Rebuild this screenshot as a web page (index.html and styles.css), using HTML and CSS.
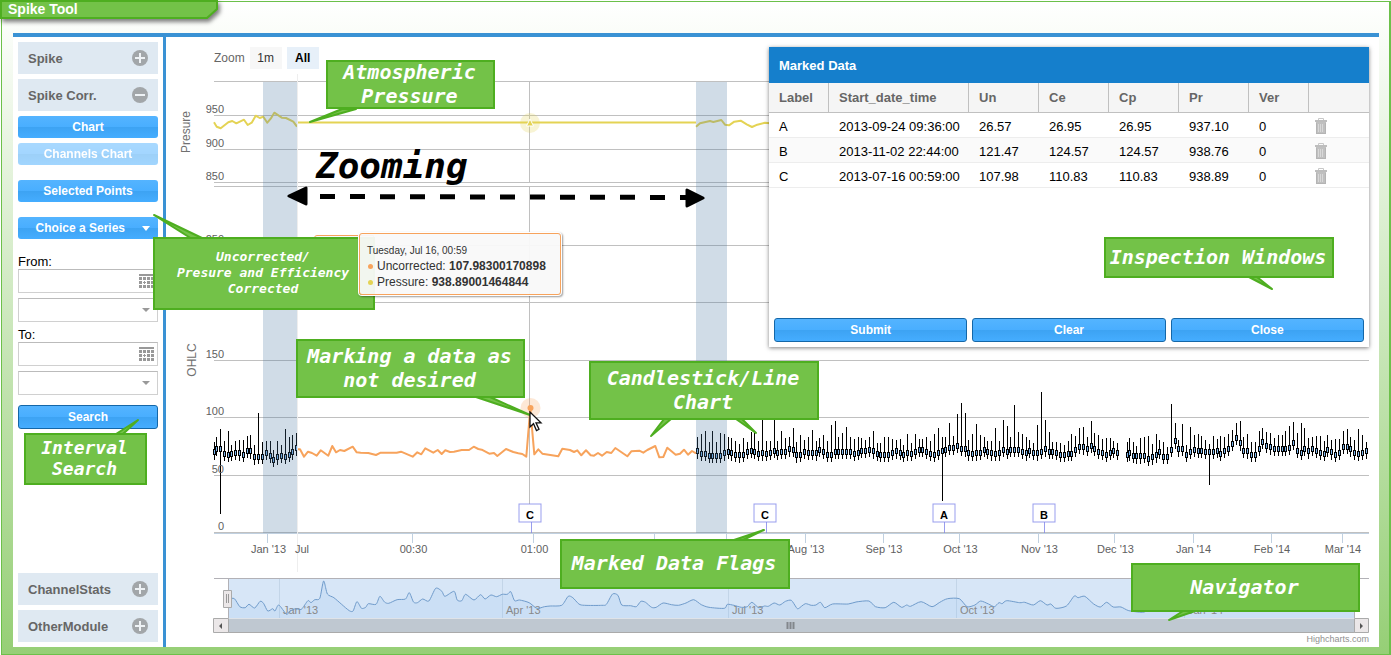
FILE: index.html
```html
<!DOCTYPE html>
<html lang="en">
<head>
<meta charset="utf-8">
<title>Spike Tool</title>
<link rel="stylesheet" href="styles.css">
</head>
<body>
<div class="page">
  <header class="tab">
    <svg class="tab-shape" width="226" height="28" viewBox="0 0 226 28" aria-hidden="true"><path d="M1 1H217V9L207 18H1Z"/></svg>
    <h1 class="tab-title">Spike Tool</h1>
  </header>
  <main class="workspace">
    <aside class="sidebar">
      <button class="section" type="button">Spike
        <svg width="16" height="16" viewBox="0 0 16 16"><circle cx="8" cy="8" r="8" fill="#a2a6a9"/><path d="M3 8H13M8 3V13" stroke="#eef2f5" stroke-width="2"/></svg></button>
      <button class="section" type="button">Spike Corr.
        <svg width="16" height="16" viewBox="0 0 16 16"><circle cx="8" cy="8" r="8" fill="#a2a6a9"/><path d="M3 8H13" stroke="#eef2f5" stroke-width="2"/></svg></button>
      <button class="btn" type="button">Chart</button>
      <button class="btn" type="button" disabled>Channels Chart</button>
      <button class="btn spaced" type="button">Selected Points</button>
      <button class="btn spaced menu" type="button">Choice a Series
        <svg width="8" height="5" viewBox="0 0 8 5"><path d="M0 0H8L4 5Z" fill="#fff"/></svg></button>
      <form class="interval">
        <label for="from-date">From:</label>
        <div class="field"><input id="from-date" type="text"><svg width="15" height="14"><use href="#calendar"/></svg></div>
        <div class="field"><select aria-label="From time"><option></option></select><svg class="caret" width="8" height="4" viewBox="0 0 8 4"><path d="M0 0H8L4 4Z" fill="#999"/></svg></div>
        <label for="to-date">To:</label>
        <div class="field"><input id="to-date" type="text"><svg width="15" height="14"><use href="#calendar"/></svg></div>
        <div class="field"><select aria-label="To time"><option></option></select><svg class="caret" width="8" height="4" viewBox="0 0 8 4"><path d="M0 0H8L4 4Z" fill="#999"/></svg></div>
        <button class="btn outlined" type="button">Search</button>
      </form>
      <div class="modules">
        <button class="section" type="button">ChannelStats
          <svg width="16" height="16" viewBox="0 0 16 16"><circle cx="8" cy="8" r="8" fill="#a2a6a9"/><path d="M3 8H13M8 3V13" stroke="#eef2f5" stroke-width="2"/></svg></button>
        <button class="section" type="button">OtherModule
          <svg width="16" height="16" viewBox="0 0 16 16"><circle cx="8" cy="8" r="8" fill="#a2a6a9"/><path d="M3 8H13M8 3V13" stroke="#eef2f5" stroke-width="2"/></svg></button>
      </div>
    </aside>
    <section class="chart">
      <div class="range">
        <span>Zoom</span>
        <button type="button">1m</button>
        <button type="button" class="active">All</button>
      </div>
      <svg class="plot" viewBox="166 69 1213 578" preserveAspectRatio="xMinYMin meet">
        <defs>
          <symbol id="calendar" viewBox="0 0 15 14"><path d="M0 0H15V2H0ZM0 3H3V6H0ZM4 3H7V6H4ZM8 3H11V6H8ZM12 3H15V6H12ZM0 7H3V10H0ZM8 7H11V10H8ZM12 7H15V10H12ZM5 7H6V8H7V9H6V10H5V9H4V8H5ZM0 11H3V14H0ZM4 11H7V14H4ZM8 11H11V14H8ZM12 11H15V14H12Z" fill="#999"/></symbol>
          <symbol id="trash" viewBox="0 0 12 16"><path d="M3.500 2V.5H8.500V2" fill="none" stroke="#c8c8c8"/><path d="M0 2H12V4H0Z" fill="#bdbdbd"/><path d="M1 4H11V16H1Z" fill="#c0c0c0"/><path d="M3.500 6V14M5.500 6V14M7.500 6V14" stroke="#d8d8d8"/><path d="M1 15.500H11M1.500 5V16M10.500 5V16" stroke="#b4b4b4"/></symbol>
        </defs>
        <path class="grid" d="M214 81.500H1369M214 115.500H1369M214 149.500H1369M214 182.500H1369M214 186.500H1369M214 245.500H1369M214 302.500H1369M214 360.500H1369M214 417.500H1369M214 475.500H1369M214 532.500H1369"/>
        <path class="axis" d="M214 533.500H1369M267.500 534V543M412.500 534V543M533.500 534V543M654.500 534V543M726.500 534V543M805.500 534V543M883.500 534V543M959.500 534V543M1038.500 534V543M1114.500 534V543M1193.500 534V543M1271.500 534V543M1342.500 534V543"/>
        <path class="grid" d="M529.500 82V182M529.500 187V504"/>
        <g id="candles"></g>
        <path id="pressure" class="pressure"/>
        <path id="uncorrected" class="uncorrected"/>
        <path class="band" d="M263 82H297V533H263ZM696 82H727V533H696Z"/>
        <path d="M297.500 74V572" stroke="#eee"/>
        <circle cx="530" cy="123" r="10" fill="#e4d354" opacity=".25"/><path d="M530 119L533.500 126H526.500Z" fill="#e4d354" stroke="#fff"/>
        <circle cx="530.500" cy="408" r="10" fill="#f7a35c" opacity=".25"/><circle cx="530.500" cy="408" r="3" fill="#f7a35c"/>
        <g class="labels">
          <g text-anchor="end"><text x="224" y="113">950</text><text x="224" y="147">900</text><text x="224" y="180">850</text><text x="224" y="243">250</text><text x="224" y="358">150</text><text x="224" y="415">100</text><text x="224" y="473">50</text><text x="224" y="530">0</text></g>
          <g text-anchor="middle"><text x="268.500" y="553">Jan '13</text><text x="302" y="553">Jul</text><text x="413.500" y="553">00:30</text><text x="534.500" y="553">01:00</text><text x="806" y="553">Aug '13</text><text x="884" y="553">Sep '13</text><text x="960.500" y="553">Oct '13</text><text x="1039.500" y="553">Nov '13</text><text x="1115.500" y="553">Dec '13</text><text x="1193.500" y="553">Jan '14</text><text x="1272" y="553">Feb '14</text><text x="1343" y="553">Mar '14</text></g>
          <g text-anchor="middle" class="titles"><text transform="translate(190 132) rotate(-90)">Presure</text><text transform="translate(196 360) rotate(-90)">OHLC</text></g>
        </g>
        <g class="flags">
          <path d="M531.500 522V533M766.500 522V533M944.500 522V533M1044.500 522V533"/>
          <rect x="519" y="504" width="22" height="18"/><rect x="754" y="504" width="22" height="18"/><rect x="933" y="504" width="22" height="18"/><rect x="1033" y="504" width="22" height="18"/>
          <text x="530" y="519">C</text><text x="765" y="519">C</text><text x="944" y="519">A</text><text x="1044" y="519">B</text>
        </g>
        <g class="navigator">
          <path d="M229 579H1354V618H229Z" fill="#d7e6f7"/>
          <path d="M279.500 579V618M502.500 579V618M728.500 579V618M956.500 579V618M1184.500 579V618" stroke="#c3d5e8"/>
          <path id="overview-area" fill="#7eb2e4" opacity=".13"/>
          <g class="nav-labels"><text x="283" y="614">Jan '13</text><text x="506" y="614">Apr '13</text><text x="732" y="614">Jul '13</text><text x="960" y="614">Oct '13</text><text x="1188" y="614">Jan '14</text></g>
          <path id="overview" fill="none" stroke="#6f9bcb"/>
          <path d="M214 578.500H1369M228.500 579V618M1354.500 579V618" stroke="#b2b1b6"/>
          <path d="M228 618.500H1355V632.500H228Z" fill="#bfc8d1"/><path d="M228 632.500H1355" stroke="#aaa"/>
          <path d="M213.500 618.500H228.500V632.500H213.500ZM1354.500 618.500H1368.500V632.500H1354.500ZM223.500 590.500H231.500V607.500H223.500Z" fill="#ebe7e8" stroke="#aaa"/>
          <path d="M222 623V629L219 626ZM1360 623V629L1363 626Z" fill="#555"/>
          <path d="M226.500 594V603M228.500 594V603" stroke="#999"/>
          <path d="M787.500 622V629M790.500 622V629M793.500 622V629" stroke="#82878c" stroke-width="2"/>
        </g>
        <a href="#highcharts"><text class="credit" x="1369" y="642">Highcharts.com</text></a>
      </svg>
      <div class="window">
        <h2>Marked Data</h2>
        <table>
          <colgroup><col class="c60"><col class="c140"><col class="c70"><col class="c70"><col class="c70"><col class="c70"><col class="c60"><col class="c60"></colgroup>
          <thead><tr><th>Label</th><th>Start_date_time</th><th>Un</th><th>Ce</th><th>Cp</th><th>Pr</th><th>Ver</th><th></th></tr></thead>
          <tbody>
            <tr><td>A</td><td>2013-09-24 09:36:00</td><td>26.57</td><td>26.95</td><td>26.95</td><td>937.10</td><td>0</td><td><button type="button" aria-label="Delete A"><svg width="12" height="16"><use href="#trash"/></svg></button></td></tr>
            <tr><td>B</td><td>2013-11-02 22:44:00</td><td>121.47</td><td>124.57</td><td>124.57</td><td>938.76</td><td>0</td><td><button type="button" aria-label="Delete B"><svg width="12" height="16"><use href="#trash"/></svg></button></td></tr>
            <tr><td>C</td><td>2013-07-16 00:59:00</td><td>107.98</td><td>110.83</td><td>110.83</td><td>938.89</td><td>0</td><td><button type="button" aria-label="Delete C"><svg width="12" height="16"><use href="#trash"/></svg></button></td></tr>
          </tbody>
        </table>
        <footer><button class="btn outlined" type="button">Submit</button><button class="btn outlined" type="button">Clear</button><button class="btn outlined" type="button">Close</button></footer>
      </div>
    </section>
  </main>

  <div class="notes">
    <div class="ghost-tip"></div>
    <svg class="tails" width="1391" height="655" viewBox="0 0 1391 655" aria-hidden="true">
      <g class="tail">
        <path d="M342 109L310 122L356 109Z"/><path d="M192 239L154 215L204 239Z"/><path d="M116 434L138 420L123 434Z"/>
        <path d="M476 397L530 415L490 397Z"/><path d="M664 419L651 436L671 419Z"/><path d="M736 419L756 433L742 419Z"/>
        <path d="M734 540L764 530L743 540Z"/><path d="M1249 277L1272 289L1257 277Z"/><path d="M1183 611L1169 620L1195 611Z"/>
      </g>
      <path d="M320 196.500L686 197.500" stroke="#000" stroke-width="5" stroke-dasharray="15 15"/>
      <path d="M680 197.500H688" stroke="#000" stroke-width="5"/>
      <path d="M289 196L306 188V204ZM703 198L687 190V206Z" stroke="#000" stroke-width="3" stroke-linejoin="round"/>
    </svg>
    <div class="callout atmospheric">Atmospheric<br>Pressure</div>
    <div class="callout series">Uncorrected/<br>Presure and Efficiency<br>Corrected</div>
    <div class="callout search">Interval<br>Search</div>
    <div class="callout marking">Marking a data as<br>not desired</div>
    <div class="callout candle">Candlestick/Line<br>Chart</div>
    <div class="callout flags-note">Marked Data Flags</div>
    <div class="callout inspection">Inspection Windows</div>
    <div class="callout navigator-note">Navigator</div>
    <div class="zooming">Zooming</div>
    <div class="tooltip">
      <small>Tuesday, Jul 16, 00:59</small>
      <span><i class="dot orange"></i>Uncorrected: <b>107.98300170898</b></span>
      <span><i class="dot yellow"></i>Pressure: <b>938.89001464844</b></span>
    </div>
    <svg class="cursor" width="14" height="21" viewBox="0 0 14 21"><path d="M1 1V16L4.500 12.700L7.500 19.500L10 18.300L7 11.800H12Z" fill="#fff" stroke="#111" stroke-width="1.300"/></svg>
  </div>
</div>
<script src="chart.js"></script>
</body>
</html>
```

FILE: styles.css
```css
* { box-sizing: border-box; }
body { margin: 0; font-family: "Liberation Sans", Arial, sans-serif; font-size: 13px; color: #000; background: #fff; }
button, input, select { font: inherit; margin: 0; }
.page { position: relative; min-height: 100vh; padding: 0 0 0 1px; display: flex; }
.workspace { flex: 1; display: flex; margin-top: 1px; border: solid #6cc04a; border-width: 1px 2px 1px 1px; padding: 31px 10px 7px 11px; background: linear-gradient(#fff, #96cf76); }
.tab { position: absolute; left: 0; top: 0; }
.tab-shape { display: block; filter: drop-shadow(2px 3px 2px rgba(0, 0, 0, .5)); }
.tab-shape path { fill: #73c248; stroke: #4eae20; stroke-width: 2px; }
.tab-title { position: absolute; left: 8px; top: 0; margin: 0; font-size: 14px; line-height: 18px; color: #fff; white-space: nowrap; }

.sidebar { flex: 0 0 153px; display: flex; flex-direction: column; gap: 5px; padding: 5px; background: #fff; border-top: 4px solid #3a92d4; border-right: 3px solid #3a92d4; }
.section { display: flex; align-items: center; justify-content: space-between; width: 100%; height: 32px; padding: 0 10px; border: 0; background: #dfe9f2; color: #666; font-weight: bold; }
.btn { height: 22px; padding: 0; border: 0; border-radius: 3px; color: #fff; font-size: 12px; font-weight: bold; background: linear-gradient(#54b4ff 0%, #49aeff 50%, #3da3f3 52%, #45adff 100%); }
.btn:disabled { opacity: .5; }
.btn.spaced { margin-top: 10px; }
.btn.menu { display: flex; align-items: center; justify-content: flex-end; gap: 17px; padding-right: 8px; }
.btn.outlined { height: 24px; border: 1px solid #1467a8; }
.interval { display: flex; flex-direction: column; gap: 5px; padding-top: 10px; }
.interval label { line-height: 15px; margin-bottom: -5px; }
.interval .btn { margin-top: 5px; }
.field { position: relative; height: 24px; }
.field input, .field select { display: block; width: 100%; height: 24px; border: 1px solid #d0d0d0; border-top-color: #bbb; border-radius: 0; background: #fff; appearance: none; }
.field svg { position: absolute; right: 4px; top: 5px; pointer-events: none; }
.field .caret { right: 8px; top: 10px; }
.modules { display: flex; flex-direction: column; gap: 5px; margin-top: auto; }

.chart { flex: 1; min-width: 0; position: relative; background: #fff; border-top: 4px solid #3a92d4; }
.range { display: flex; align-items: center; gap: 5px; height: 32px; padding: 10px 0 0 48px; color: #666; font-size: 12px; }
.range button { width: 32px; height: 22px; padding: 0; border: 0; background: #f7f7f7; color: #333; }
.range .active { background: #e7f0f9; color: #000; font-weight: bold; }
.plot { display: block; width: 100%; height: auto; }
.grid { stroke: #c0c0c0; fill: none; }
.axis { stroke: #c0d0e0; fill: none; }
.band { fill: rgba(68, 114, 160, .25); }
.pressure, .uncorrected { fill: none; stroke-width: 2px; stroke-linejoin: round; }
.pressure { stroke: #e4d354; }
.uncorrected { stroke: #f7a35c; }
.wick { stroke: #000; }
.candle-body { fill: #7cb5ec; stroke: #000; }
.labels text, .nav-labels text { font-size: 11px; fill: #606060; }
.labels .titles text { font-size: 12px; fill: #707070; }
.nav-labels text { fill: #888; }
.flags path, .flags rect { stroke: #8085e9; fill: none; opacity: .8; }
.flags rect { fill: #fff; }
.flags text { font-size: 11px; font-weight: bold; text-anchor: middle; }
.credit { font-size: 9px; fill: #909090; text-anchor: end; }

.window { position: absolute; right: 10px; top: 10px; width: 600px; min-height: 300px; display: flex; flex-direction: column; background: #fff; box-shadow: 0 1px 4px rgba(0, 0, 0, .5); }
.window h2 { margin: 0; padding: 1px 10px 0; line-height: 35px; font-size: 13px; color: #fff; background: #157fcc; }
.window table { width: 100%; table-layout: fixed; border-collapse: separate; border-spacing: 0; }
.c60 { width: 60px; }
.c70 { width: 70px; }
.c140 { width: 140px; }
.window th, .window td { padding: 0 10px; text-align: left; white-space: nowrap; }
.window th { height: 30px; color: #666; background: #f5f5f5; border-right: 1px solid #c0c0c0; border-bottom: 1px solid #c0c0c0; }
.window th:last-child { border-right: 0; }
.window td { height: 25px; padding-top: 2px; border-bottom: 1px solid #ededed; }
.window tr:nth-child(even) td { background: #fafafa; }
.window td:last-child { padding: 2px 6px 0; }
.window td button { display: block; padding: 0; border: 0; background: none; }
.window td svg { display: block; }
.window footer { display: flex; gap: 5px; padding: 5px; margin-top: auto; }
.window footer .btn { flex: 1; }

.notes { position: absolute; left: 0; top: 0; pointer-events: none; }
.tails { position: absolute; left: 0; top: 0; }
.tail path { fill: #73c248; stroke: #4eae20; stroke-width: 2px; stroke-linejoin: round; }
.callout { position: absolute; display: flex; align-items: center; justify-content: center; padding: 0 2px 2px 0; text-align: center; white-space: nowrap; color: #fff; background: #73c248; border: 2px solid #4eae20; font: italic bold 20px/24px "DejaVu Sans Mono", monospace; }
.atmospheric { left: 326px; top: 60px; width: 169px; height: 49px; }
.series { left: 153px; top: 237px; width: 222px; height: 73px; font-size: 13px; line-height: 16px; }
.search { left: 24px; top: 433px; width: 123px; height: 52px; font-size: 18px; line-height: 21px; }
.marking { left: 296px; top: 339px; width: 229px; height: 59px; }
.candle { left: 589px; top: 361px; width: 230px; height: 59px; }
.flags-note { left: 560px; top: 539px; width: 230px; height: 50px; }
.inspection { left: 1104px; top: 237px; width: 230px; height: 41px; }
.navigator-note { left: 1131px; top: 563px; width: 229px; height: 49px; }
.zooming { position: absolute; left: 316px; top: 145px; font: italic bold 36px/42px "DejaVu Sans Mono", monospace; }
.tooltip { position: absolute; left: 359px; top: 233px; width: 202px; height: 62px; display: flex; flex-direction: column; padding: 9px 0 0 7px; border: 1px solid #f7a35c; border-radius: 3px; background: rgba(249, 249, 249, .95); box-shadow: 0 0 0 1px #fff, 1px 1px 2px 1px rgba(0, 0, 0, .4); color: #333; font-size: 12px; line-height: 16px; white-space: nowrap; }
.tooltip small { font-size: 10px; line-height: 15px; }
.dot { display: inline-block; width: 5px; height: 5px; margin: 0 4px 1px 1px; border-radius: 50%; }
.orange { background: #f7a35c; }
.yellow { background: #e4d354; }
.ghost-tip { position: absolute; left: 314px; top: 235px; width: 60px; height: 20px; border: 1px solid #f7a35c; border-radius: 3px 0 0 0; background: #f9f9f9; }
.cursor { position: absolute; left: 529px; top: 411px; }
```

FILE: chart.js
```js
const el = id => document.getElementById(id);
const SVG = 'http://www.w3.org/2000/svg';

// Turns a flat "x,y x,y" list on a finer grid into chart coordinates.
const points = (text, ox, oy, sx, sy) => text.trim().split(/\s+/).map(p => {
  const [x, y] = p.split(',').map(Number);
  return [ox + x / sx, oy + y / sy];
});
const line = pts => 'M' + pts.map(p => p[0].toFixed(1) + ' ' + p[1].toFixed(1)).join('L');
// Catmull-Rom spline through the points.
const curve = pts => {
  let d = 'M' + pts[0].map(n => n.toFixed(1)).join(' ');
  for (let i = 1; i < pts.length; i++) {
    const a = pts[i - 1], b = pts[i];
    const before = pts[i - 2] || a, after = pts[i + 1] || b;
    const c = [
      a[0] + (b[0] - before[0]) / 8, a[1] + (b[1] - before[1]) / 8,
      b[0] - (after[0] - a[0]) / 8, b[1] - (after[1] - a[1]) / 8,
      b[0], b[1]];
    d += 'C' + c.map(n => n.toFixed(1)).join(' ');
  }
  return d;
};

el('pressure').setAttribute('d',
  line(points('642,367 650,380 662,385 685,367 697,363 709,370 732,359 743,375 755,368 767,347 779,354 790,350 802,368 812,356 823,338 832,344 845,353 858,354 880,365 891,380', 0, 0, 3, 3)) +
  'M297 122.500H696' +
  line(points('1188,260 1200,250 1230,243 1240,246 1264,240 1275,254 1287,256 1303,245 1322,242 1340,253 1356,261 1372,254 1395,248 1410,250', 300, 40, 3, 3)));

el('uncorrected').setAttribute('d', line(points(`21,358 30,358 42,380 54,365 66,369 80,377 92,361 115,377 127,348 138,367 150,360 163,363 188,350 200,367 212,368 235,369 258,375 272,368 320,368 333,365 368,380 382,367 394,373 406,355 430,368 443,360 455,372 466,361 480,366 492,365 515,360 537,360 551,350 565,357 575,359 598,371 612,369 622,378 648,357 670,366 685,370 697,372 709,380 721,235 733,373 745,358 757,371 805,379 817,356 840,360 852,366 862,361 874,376 888,361 902,376 912,377 924,369 936,377 950,366 964,369 976,354 1012,379 1024,364 1048,362 1060,368 1072,360 1084,354 1096,348 1108,382 1120,381 1132,353 1157,374 1170,371 1182,359 1194,374 1206,363 1218,370`, 290, 330, 3, 3)));

const overview = points(`76,206 90,206 104,230 118,233 128,223 143,234 157,214 166,220 177,243 190,236 196,243 206,225 226,253 235,243 250,236 265,238 282,212 290,218 300,209 313,205 323,153 333,192 350,203 370,223 390,242 400,243 410,215 422,235 433,232 440,221 460,223 470,199 482,216 493,220 515,209 537,207 547,188 558,216 568,218 582,207 598,213 616,175 632,184 640,199 664,184 672,210 684,212 694,193 716,210 733,194 745,207 760,195 775,200 790,193 803,193 812,185 822,212 835,210 860,218 880,235 900,230 915,228 945,226 962,199 974,203 990,222 1005,226 1050,226 1062,223 1078,192 1092,196 1102,225 1125,227 1140,230 1152,214 1164,217 1180,232 1192,232 1210,219 1232,224 1250,226 1270,219 1290,209 1310,224 1330,232 1370,235 1378,223 1395,226 1415,232 1430,230 1442,217 1460,233 1475,228 1485,229 1500,219 1515,225 1530,214 1545,211 1558,232`, 200, 530, 2.613, 3)
  .concat(points(`47,236 65,221 80,226 92,225 104,217 115,233 135,222 175,222 195,216 228,213 245,230 270,233 292,217 312,232 325,225 335,229 362,215 390,230 410,217 430,206 460,206 480,230 500,225 515,213 535,222 550,230 562,218 570,221 582,212 615,218 628,217 650,225 668,212 685,225 695,222 708,235 735,228 755,198 765,203 782,199 805,222 822,231 838,217 855,231 875,231 895,242 930,247 950,240 1000,236 1475,236`, 780, 530, 2.566, 3)).filter((p, i, all) => i === 0 || p[0] > all[i - 1][0]);
el('overview').setAttribute('d', curve(overview));
el('overview-area').setAttribute('d', curve(overview) + 'V618H229Z');

function add(name, attrs) {
  const node = document.createElementNS(SVG, name);
  for (const key in attrs) node.setAttribute(key, attrs[key]);
  el('candles').appendChild(node);
}
function candle(x, high, mid, low) {
  const cx = Math.floor(x) + 0.5;
  add('path', { class: 'wick', d: `M${cx} ${Math.round(high)}V${Math.round(low)}` });
  add('rect', { class: 'candle-body', x: cx - 1, y: Math.round(mid - 2.5) + 0.5, width: 2, height: 5 });
}

const leftX = [643, 649, 661, 673, 685, 694, 706, 718, 730, 742, 751, 763, 775, 787, 799, 811, 820, 832, 844, 856, 868, 877, 889];
const leftHigh = [126, 111, 87, 123, 93, 135, 123, 120, 120, 108, 105, 135, 39, 126, 123, 123, 150, 123, 135, 87, 111, 105, 99];
const leftMid = [155, 145, 145, 160, 162, 160, 156, 158, 162, 150, 152, 170, 168, 168, 156, 165, 178, 170, 166, 168, 162, 155, 143];
leftX.forEach((x, i) => candle(x / 3, 400 + leftHigh[i] / 3, 400 + leftMid[i] / 3, i === 2 ? 514 : 408 + leftMid[i] / 3));

const highs = [
  292,282,272,307,272,307,280,282,292,294, 304,312,294,306,276,280,304,240,304,304,
  240,304,272,294,292,264,306,284,300,292, 270,304,294,286,304,256,243,292,280,262,
  292,298,292,294,300,292,273,310,310,292, 292,296,300,296,316,282,310,282,297,296,
  292,304,282,264,292,292,250,288,222,189, 220,300,282,252,284,292,304,304,264,304,
  240,258,292,195,276,282,292,300,308,256, 156,240,276,306,306,310,314,302,282,288,
  264,261,292,243,279,285,297,294,294,302, 310,0,306,294,306,318,294,291,288,312,
  282,300,306,322,192,249,300,252,314,261, 285,282,288,300,312,288,297,288,291,282,
  270,249,243,290,282,306,306,273,264,276, 279,294,285,285,273,258,246,279,249,264,
  294,291,288,288,302,285,300,297,297,273, 267,291,300,267,285,306];
const mids = [
  332,340,340,346,346,346,346,338,333,338, 342,344,342,334,330,334,340,338,340,336,
  330,336,334,334,326,328,344,342,334,336, 336,338,328,333,342,342,334,334,334,334,
  334,340,336,330,330,328,332,340,342,342, 342,336,332,336,342,338,340,334,328,328,
  334,340,342,336,330,328,322,321,316,324, 326,338,340,338,336,328,334,338,340,338,
  328,334,328,328,328,334,338,330,336,338, 334,326,334,334,336,342,342,340,340,328,
  318,320,324,316,324,334,336,342,336,330, 336,0,342,338,345,347,347,345,354,350,
  344,334,348,348,328,302,326,325,342,334, 328,330,330,334,334,334,330,340,330,324,
  309,291,308,330,332,342,342,324,303,315, 320,325,324,324,324,322,306,330,336,325,
  332,325,331,336,340,328,335,342,337,318, 318,326,336,340,336,332];
const deepLows = { 64: 501, 134: 485 };
highs.forEach((high, i) => {
  if (!high) return;
  const x = i === 112 ? 1127 : 697.6 + i * 3.82;
  candle(x, 340 + high / 3, 340 + mids[i] / 3, deepLows[i] || 348 + mids[i] / 3);
});
```
